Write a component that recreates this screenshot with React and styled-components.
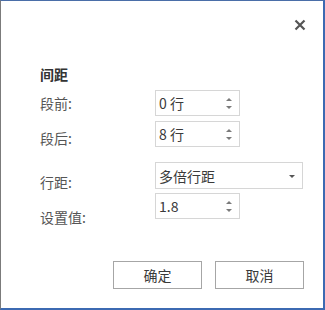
import React, { useState } from "react"
import styled, { createGlobalStyle } from "styled-components"

const GlobalStyle = createGlobalStyle`
  html, body {
    margin: 0;
    padding: 0;
    background: #fff;
  }
  body {
    font-family: "Noto Sans CJK SC", "Noto Sans", sans-serif;
  }
`

const Dialog = styled.div`
  box-sizing: border-box;
  width: 325px;
  height: 310px;
  display: flex;
  flex-direction: column;
  background: #fff;
  border-top: 1px solid #4a6ea8;
  border-left: 1px solid #7b7b7b;
  border-right: 2px solid #3c6ab2;
  border-bottom: 2px solid #3c6ab2;
  padding: 18px 19px 19px 39px;
  font-family: "Noto Sans CJK SC", sans-serif;
`

const Header = styled.div`
  display: flex;
  justify-content: flex-end;
  margin-right: -2px;
  height: 12px;
`

const CloseButton = styled.button`
  all: unset;
  width: 12px;
  height: 12px;
  display: flex;
  cursor: pointer;
`

const Heading = styled.div`
  margin-top: 33px;
  font-size: 14px;
  line-height: 20px;
  font-weight: 700;
  color: #333;
`

const Form = styled.div`
  display: flex;
  flex-direction: column;
  margin-top: 6px;
`

const Field = styled.div`
  display: grid;
  grid-template-columns: 115px auto;
  align-items: start;
  margin-top: ${p => p.$space}px;
`

const Label = styled.div`
  font-size: 14px;
  line-height: 20px;
  color: #555;
  padding-top: ${p => p.$drop}px;
  margin-bottom: -${p => p.$drop}px;
`

const SpinBox = styled.div`
  box-sizing: border-box;
  position: relative;
  width: 85px;
  height: 26px;
  border: 1px solid #d6d6d6;
  display: flex;
  align-items: center;
  padding-left: 3px;
  font-size: 14px;
  color: #3a3a3a;
`

const Arrows = styled.div`
  position: absolute;
  right: 7px;
  top: 0;
  bottom: 0;
  display: flex;
  flex-direction: column;
  justify-content: center;
  gap: 5px;
`

const Arrow = styled.span`
  width: 0;
  height: 0;
  border-left: 3px solid transparent;
  border-right: 3px solid transparent;
  ${p => (p.$down ? "border-top: 3px solid #7a7a7a;" : "border-bottom: 3px solid #7a7a7a;")}
`

const Select = styled.div`
  box-sizing: border-box;
  position: relative;
  width: 148px;
  height: 27px;
  border: 1px solid #d6d6d6;
  display: flex;
  align-items: center;
  padding-left: 3px;
  font-size: 14px;
  color: #3a3a3a;
`

const Caret = styled.span`
  position: absolute;
  right: 7px;
  top: 12px;
  width: 0;
  height: 0;
  border-left: 3px solid transparent;
  border-right: 3px solid transparent;
  border-top: 3px solid #555;
`

const Footer = styled.div`
  margin-top: auto;
  display: flex;
  justify-content: flex-end;
  gap: 13px;
`

const Button = styled.button`
  box-sizing: border-box;
  width: 89px;
  height: 28px;
  background: #fff;
  border: 1px solid #a6a6a6;
  font-family: "Noto Sans CJK SC", sans-serif;
  font-size: 14px;
  color: #3a3a3a;
  padding: 0;
  cursor: pointer;
`

const Spin = ({ value }) => (
  <SpinBox>
    {value}
    <Arrows>
      <Arrow />
      <Arrow $down />
    </Arrows>
  </SpinBox>
)

const App = () => {
  const [before] = useState("0 行")
  const [after] = useState("8 行")
  const [val] = useState("1.8")

  return (
    <>
      <GlobalStyle />
      <Dialog>
        <Header>
          <CloseButton aria-label="关闭">
            <svg width="12" height="12" viewBox="0 0 12 12">
              <path d="M1.5 1.5 L10.5 10.5 M10.5 1.5 L1.5 10.5" stroke="#555" strokeWidth="2.2" />
            </svg>
          </CloseButton>
        </Header>
        <Heading>间距</Heading>
        <Form>
          <Field $space={0}>
            <Label $drop={3}>段前:</Label>
            <Spin value={before} />
          </Field>
          <Field $space={5}>
            <Label $drop={7}>段后:</Label>
            <Spin value={after} />
          </Field>
          <Field $space={15}>
            <Label $drop={10}>行距:</Label>
            <Select>
              多倍行距
              <Caret />
            </Select>
          </Field>
          <Field $space={4}>
            <Label $drop={14}>设置值:</Label>
            <Spin value={val} />
          </Field>
        </Form>
        <Footer>
          <Button>确定</Button>
          <Button>取消</Button>
        </Footer>
      </Dialog>
    </>
  )
}

export default App
